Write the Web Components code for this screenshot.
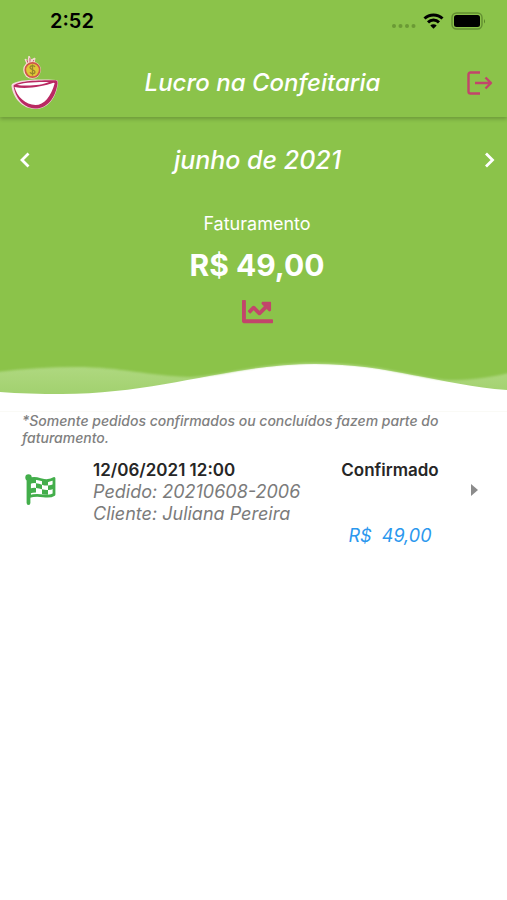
<!DOCTYPE html>
<html lang="pt-BR">
<head>
<meta charset="utf-8">
<meta name="viewport" content="width=device-width, initial-scale=1">
<title>Lucro na Confeitaria</title>
<style>
  body {
    margin: 0;
    background: #fff;
    font-family: Inter, "Liberation Sans", sans-serif;
    color: #262626;
  }
</style>
</head>
<body>
<lucro-app></lucro-app>

<script>
const resetButton = `
  button {
    display: flex;
    padding: 0;
    border: 0;
    background: none;
    color: inherit;
    cursor: pointer;
  }
  svg { display: block; }
`;

class StatusBar extends HTMLElement {

  constructor() {
    super();
    this.attachShadow({ mode: "open" });
    this.shadowRoot.innerHTML = `
    <style>
    :host {
      display: flex;
      justify-content: space-between;
      align-items: center;
      height: 42px;
      padding: 0 20px 0 50px;
      color: #000;
      font-size: 20px;
      font-weight: 600;
    }
    svg { display: block; }
    </style>
    <span><slot></slot></span>
    <svg width="96" height="20" viewBox="0 0 96 20" aria-hidden="true">
      <g fill="#6b9a35">
        <circle cx="3" cy="15" r="2"/><circle cx="9.500" cy="15" r="2"/>
        <circle cx="16" cy="15" r="2"/><circle cx="22.500" cy="15" r="2"/>
      </g>
      <g fill="none" stroke="#000" stroke-width="3">
        <path d="M33.500 7.500a13 13 0 0 1 18 0"/>
        <path d="M37 11.300a8 8 0 0 1 11 0"/>
      </g>
      <path d="M42.500 17.800l-3.200-3.300a4.500 4.500 0 0 1 6.400 0z"/>
      <rect x="61" y="2" width="30" height="16" rx="4.500" fill="none" stroke="#638f31" stroke-width="1.400"/>
      <rect x="63" y="4" width="26" height="12" rx="2.500"/>
      <path d="M93 8v4.500q2-2.200 0-4.500z" fill="#57802a"/>
    </svg>
    `;
  }
}

class AppBar extends HTMLElement {

  constructor() {
    super();
    this.attachShadow({ mode: "open" });
    this.shadowRoot.innerHTML = `
    <style>
    ${resetButton}
    :host {
      display: flex;
      justify-content: space-between;
      align-items: center;
      height: 68px;
      padding: 7px 14px 0 10px;
      color: #fff;
    }
    h1 {
      margin: 0;
      font-size: 24px;
      font-weight: 500;
      font-style: italic;
      line-height: 32px;
    }
    </style>
    <svg width="50" height="56" viewBox="0 0 50 56" role="img" aria-label="Logo">
      <path d="M17 9l-2-5 3 2 1-5 2 4 4-2-1 6z" fill="#f5d6cf" stroke="#f8ddd5" stroke-width="1"/>
      <path d="M18 8l-1-3M20 8V3M22 8l2-3" stroke="#c8566c" stroke-width="1" fill="none"/>
      <circle cx="22" cy="15" r="8.800" fill="#f8ded0"/>
      <circle cx="22.500" cy="15" r="7.200" fill="#e2c637" stroke="#ce5948" stroke-width="1.700"/>
      <path d="M25 12c-1-2-5-1.500-5 .5 0 2.500 5 2 5 4.500 0 2-4 2.500-5 .3M22.500 9.500v11" stroke="#95862b" stroke-width="1.300" fill="none"/>
      <path d="M1.500 31C1 26 19 23.500 46 25q2 0 2 3C46 45 36 54.500 25 54 12 53.500 3 43 1.500 31z" fill="#f6d8df"/>
      <path d="M3.500 30.500C8 26 26 25 46 25.200q2 .5 1.600 3C45.500 44 36 54 25 53.500 13 53 5 42 3.500 30.500z" fill="#b92962"/>
      <path d="M7 29.700C15 27.300 27 27 39 27c-7 3.500-24 4.500-32 2.700z" fill="#fff"/>
      <path d="M4.500 32c12 2.500 29-.5 39-4.200l1.200.4C41 41.500 34 50 25.500 50 15.500 49.500 7 42 4.500 32z" fill="#fff"/>
    </svg>
    <h1><slot></slot></h1>
    <button type="button" aria-label="Sair">
      <svg width="28" height="28" viewBox="0 0 28 28" fill="none" stroke="#c2456b" stroke-width="2.400" stroke-linejoin="round">
        <path d="M15 3.500H5.500Q3.500 3.500 3.500 5.500v17q0 2 2 2H15M10 14h16M20.500 8.500L26 14l-5.500 5.500"/>
      </svg>
    </button>
    `;
  }
}

class MonthPicker extends HTMLElement {

  constructor() {
    super();
    this.attachShadow({ mode: "open" });
    this.shadowRoot.innerHTML = `
    <style>
    ${resetButton}
    :host {
      display: flex;
      justify-content: space-between;
      align-items: center;
      padding: 0 9px 0 17px;
      font-size: 25px;
      font-weight: 500;
      font-style: italic;
      line-height: 32px;
    }
    </style>
    <button type="button" aria-label="Mês anterior">
      <svg width="16" height="20" viewBox="0 0 16 20" fill="none" stroke="#fff" stroke-width="2.800">
        <path d="M11.500 3.500L5 10l6.500 6.500"/>
      </svg>
    </button>
    <span><slot></slot></span>
    <button type="button" aria-label="Próximo mês">
      <svg width="16" height="20" viewBox="0 0 16 20" fill="none" stroke="#fff" stroke-width="2.800">
        <path d="M4 3.500l6.500 6.500L4 16.500"/>
      </svg>
    </button>
    `;
  }
}

class RevenueSummary extends HTMLElement {

  static get observedAttributes() {
    return ["label", "value"];
  }

  constructor() {
    super();
    this.attachShadow({ mode: "open" });
  }

  attributeChangedCallback() {
    this.render();
  }

  render() {
    this.shadowRoot.innerHTML = `
    <style>
    ${resetButton}
    :host {
      display: flex;
      flex-direction: column;
      align-items: center;
      padding-left: 7px;
    }
    p {
      margin: 0;
      font-size: 18px;
      line-height: 24px;
    }
    strong {
      margin: 12px 0 14px;
      font-size: 30px;
      font-weight: 700;
      line-height: 34px;
    }
    </style>
    <p>${this.getAttribute("label") || ''}</p>
    <strong>${this.getAttribute("value") || ''}</strong>
    <button type="button" aria-label="Ver gráfico">
      <svg width="31" height="31" viewBox="0 0 512 512" fill="#c2456b">
        <path d="M496 384H64V80c0-8.840-7.160-16-16-16H16C7.160 64 0 71.160 0 80v336c0 17.670 14.330 32 32 32h464c8.840 0 16-7.160 16-16v-32c0-8.840-7.160-16-16-16zM464 96H345.940c-21.380 0-32.090 25.850-16.970 40.970l32.400 32.400L288 242.750l-73.370-73.370c-12.500-12.500-32.760-12.500-45.250 0l-68.690 68.690c-6.250 6.250-6.250 16.380 0 22.630l22.620 22.620c6.250 6.250 16.380 6.250 22.630 0L192 237.250l73.370 73.370c12.500 12.500 32.760 12.500 45.250 0l96-96 32.400 32.400c15.120 15.120 40.970 4.410 40.970-16.970V112c.010-8.840-7.150-16-15.990-16z"/>
      </svg>
    </button>
    `;
  }
}

class WaveEdge extends HTMLElement {

  constructor() {
    super();
    this.attachShadow({ mode: "open" });
    this.shadowRoot.innerHTML = `
    <style>
    :host { display: block; }
    svg { display: block; width: 100%; height: 60px; }
    </style>
    <svg viewBox="0 0 507 60" preserveAspectRatio="none" aria-hidden="true">
      <defs>
        <linearGradient id="back" x1="0" y1="0" x2="0" y2="1">
          <stop offset="0.200" stop-color="#b2da84"/>
          <stop offset="1" stop-color="#a2d16f"/>
        </linearGradient>
        <filter id="soft" x="-5%" y="-20%" width="110%" height="140%">
          <feGaussianBlur stdDeviation="1"/>
        </filter>
      </defs>
      <path d="M0 0H507V39C440 34 390 13 315 13C230 13 160 43 62 43Q28 43 0 41z" fill="url(#back)"/>
      <path d="M-10 -10H517V20C490 27 470 29 450 29C420 28 380 12 315 12C260 12 220 25 190 26C150 25 120 16 76 16Q35 16 -10 22z" fill="#8bc34a" filter="url(#soft)"/>
    </svg>
    `;
  }
}

class OrderItem extends HTMLElement {

  static get observedAttributes() {
    return ["date", "order", "client", "status", "total"];
  }

  constructor() {
    super();
    this.attachShadow({ mode: "open" });
  }

  attributeChangedCallback() {
    this.render();
  }

  text(name) {
    return this.getAttribute(name) || '';
  }

  render() {
    this.shadowRoot.innerHTML = `
    <style>
    :host { display: block; }
    a {
      display: grid;
      grid-template-columns: 34px 1fr 98px 40px;
      padding: 0 28px 0 24px;
      color: inherit;
      font-size: 18px;
      line-height: 22px;
      text-decoration: none;
    }
    svg { display: block; }
    .flag { margin-top: 14px; }
    .arrow {
      margin-top: 25px;
      justify-self: end;
    }
    .info { padding-left: 35px; }
    p { margin: 0; }
    .strong {
      font-size: 17px;
      font-weight: 600;
    }
    .muted {
      color: #7b7b7b;
      font-style: italic;
    }
    .side {
      display: flex;
      flex-direction: column;
      align-items: center;
      gap: 44px;
      white-space: pre;
    }
    .total {
      color: #2b98ee;
      font-style: italic;
    }
    </style>
    <a href="#pedido">
      <svg class="flag" width="34" height="34" viewBox="0 0 34 34" aria-hidden="true">
        <circle cx="4.500" cy="4.500" r="3.200" fill="#43ae4b"/>
        <path d="M4.500 4v26" stroke="#43ae4b" stroke-width="3.800" stroke-linecap="round"/>
        <path d="M5.500 6.500C12 3 18 8.500 24 7.500Q27 7 30 5.500V21.500C23 26.500 17 19.500 5.500 23.500z" fill="#fff" stroke="#43ae4b" stroke-width="2.800" stroke-linejoin="round"/>
        <path d="M6 6.500q3-1.500 6-1v4.700q-3-.4-6 .8zM12 10.200q3 .4 6 1.500v4.500q-3-1-6-1.300zM18 7q3 1 6 .8v4.700q-3 .3-6-.8zM24 12.500q3-.3 6-1.500v4.500q-3 1.500-6 1.500zM6 15.500q3-.9 6-.6v4.700q-3-.1-6 .9zM18 16.200q3 1 6 .8v4.800q-3 .3-6-.7z" fill="#43ae4b"/>
      </svg>
      <div class="info">
        <p class="strong">${this.text("date")}</p>
        <p class="muted">Pedido: ${this.text("order")}</p>
        <p class="muted">Cliente: ${this.text("client")}</p>
      </div>
      <div class="side"><span class="strong">${this.text("status")}</span><span class="total">${this.text("total")}</span></div>
      <svg class="arrow" width="10" height="12" viewBox="0 0 10 12" aria-hidden="true">
        <path d="M2 0l7 6-7 6z" fill="#8b8b8b"/>
      </svg>
    </a>
    `;
  }
}

class LucroApp extends HTMLElement {

  constructor() {
    super();
    this.attachShadow({ mode: "open" });
    this.shadowRoot.innerHTML = `
    <style>
    :host { display: block; }
    header {
      position: relative;
      background: #8bc34a;
      box-shadow: 0 2px 4px rgba(0, 0, 0, .22);
    }
    .hero {
      background: #8bc34a;
      color: #fff;
      padding: 27px 0 24px;
    }
    revenue-summary { margin-top: 36px; }
    .note {
      margin: 0;
      padding: 0 36px 13px 22px;
      border-top: 1px solid #fafaf6;
      color: #808080;
      font-size: 14px;
      font-weight: 500;
      font-style: italic;
      line-height: 17px;
    }
    </style>
    <header>
      <status-bar>2:52</status-bar>
      <app-bar>Lucro na Confeitaria</app-bar>
    </header>
    <main>
      <section class="hero">
        <month-picker>junho de 2021</month-picker>
        <revenue-summary label="Faturamento" value="R$ 49,00"></revenue-summary>
      </section>
      <wave-edge></wave-edge>
      <p class="note">*Somente pedidos confirmados ou concluídos fazem parte do faturamento.</p>
      <order-item date="12/06/2021 12:00" order="20210608-2006" client="Juliana Pereira" status="Confirmado" total="R$  49,00"></order-item>
    </main>
    `;
  }
}

customElements.define("status-bar", StatusBar);
customElements.define("app-bar", AppBar);
customElements.define("month-picker", MonthPicker);
customElements.define("revenue-summary", RevenueSummary);
customElements.define("wave-edge", WaveEdge);
customElements.define("order-item", OrderItem);
customElements.define("lucro-app", LucroApp);
</script>
</body>
</html>
